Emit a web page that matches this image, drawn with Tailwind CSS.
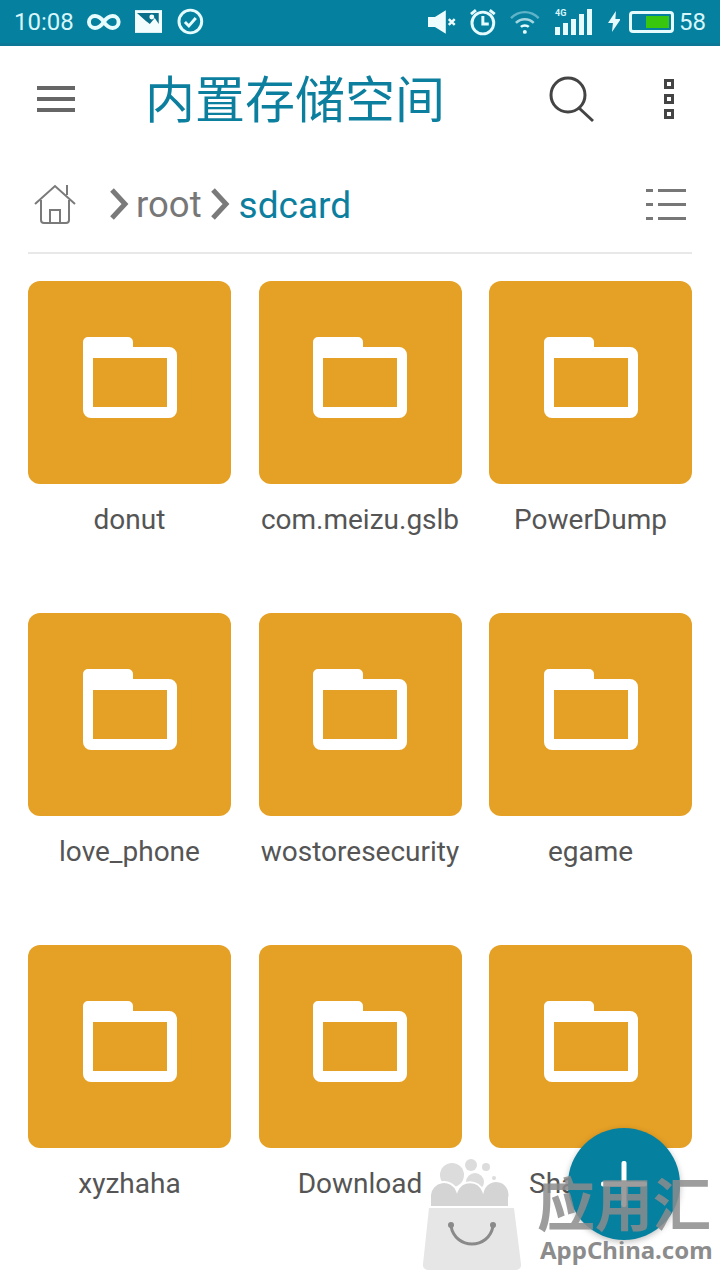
<!DOCTYPE html>
<html lang="zh">
<head>
  <meta charset="UTF-8" />
  <meta name="viewport" content="width=device-width,initial-scale=1.0" />
  <title>内置存储空间</title>
  <script src="https://cdn.jsdelivr.net/npm/@tailwindcss/browser@4"></script>
</head>
<body class="relative w-[720px] h-[1280px] overflow-hidden bg-white font-['Roboto','Noto_Sans_CJK_SC',sans-serif]">
  <!-- Status bar -->
  <div class="h-[46px] bg-[#05809f] border-b-[3px] border-[#0a7896] flex items-center pl-[14px] pr-[14px] text-[#d8f6fa] text-[24px]">
    <span class="w-[59px]">10:08</span>
    <svg class="ml-[14px]" width="34" height="18" viewBox="0 0 34 18" fill="none" stroke="#e6fbfd" stroke-width="4"><path d="M17 9C13 3 10 3 8 3a6 6 0 0 0 0 12c2 0 5 0 9-6c4-6 7-6 9-6a6 6 0 0 1 0 12c-2 0-5 0-9-6z" /></svg>
    <svg class="ml-[14px]" width="28" height="24" viewBox="0 0 28 24"><rect width="28" height="23" y="0" fill="#f4fdfd" /><path d="M2 3H24V14L20 8L15 14L11 11z" fill="#0a6f8b" /><circle cx="17" cy="7" r="2.5" fill="#f4fdfd" /></svg>
    <svg class="ml-[15px]" width="27" height="27" viewBox="0 0 27 27" fill="none" stroke="#e6fbfd"><circle cx="13.500" cy="13.500" r="11.500" stroke-width="3" /><path d="M8 14l4 4l7-8" stroke-width="3" /></svg>
    <svg class="ml-[224px]" width="28" height="24" viewBox="0 0 28 24" fill="#eefcfd"><path d="M0 7H7L18 0V24L7 17H0z" /><path d="M21 9l6 6M27 9l-6 6" stroke="#eefcfd" stroke-width="2.500" /></svg>
    <svg class="ml-[13px]" width="28" height="28" viewBox="0 0 28 28" fill="none" stroke="#e6fbfd" stroke-width="3"><circle cx="14" cy="15" r="11" /><path d="M14 8v8h6" /><path d="M2 6l5-4M26 6l-5-4" /></svg>
    <svg class="ml-[14px]" width="30" height="24" viewBox="0 0 30 24" fill="none"><path d="M1 8C9 0 21 0 29 8" stroke="#5fb3c8" stroke-width="2.500" /><path d="M6 13C11 8 19 8 24 13" stroke="#a4d6e1" stroke-width="2.500" /><path d="M11 17c2-2 6-2 8 0" stroke="#e6fbfd" stroke-width="2.500" /><circle cx="15" cy="22" r="2" fill="#e6fbfd" /></svg>
    <div class="ml-[15px] relative w-[37px] h-[26px]">
      <span class="absolute left-0 top-[-1px] text-[9px] leading-[10px] font-bold">4G</span>
      <div class="absolute inset-0 flex items-end gap-[3px]">
        <span class="w-[5px] h-[8px] bg-[#e6fbfd]"></span><span class="w-[5px] h-[12px] bg-[#e6fbfd]"></span><span class="w-[5px] h-[16px] bg-[#e6fbfd]"></span><span class="w-[5px] h-[21px] bg-[#e6fbfd]"></span><span class="w-[5px] h-[26px] bg-[#e6fbfd]"></span>
      </div>
    </div>
    <svg class="ml-[16px]" width="13" height="21" viewBox="0 0 13 21" fill="#e6fbfd"><path d="M8 0L0 12H5L4 21L13 8H7.500z" /></svg>
    <div class="ml-[9px] w-[45px] h-[22px] border-[3px] border-[#e6fbfd] rounded-[4px] flex justify-end pr-[2px] py-[2px]">
      <div class="w-[23px] bg-[#38c60f]"></div>
    </div>
    <span class="ml-[5px]">58</span>
  </div>

  <!-- Toolbar -->
  <header class="h-[106px] flex items-center pl-[37px]">
    <div class="w-[38px] flex flex-col gap-[7px] mt-[-1px]">
      <span class="h-[4px] bg-[#666]"></span><span class="h-[4px] bg-[#666]"></span><span class="h-[4px] bg-[#666]"></span>
    </div>
    <h1 class="ml-[70px] mt-[-6px] w-[302px] text-[50px] leading-none font-['Noto_Sans_CJK_SC',sans-serif] font-normal text-[#0d7f9e] whitespace-nowrap">内置存储空间</h1>
    <svg class="ml-[100px]" width="50" height="50" viewBox="0 0 50 50" fill="none" stroke="#444" stroke-width="3"><circle cx="21" cy="21" r="17" /><path d="M32 34L46 47" /></svg>
    <div class="ml-[67px] flex flex-col gap-[5px]">
      <span class="w-[10px] h-[10px] border-[3px] border-[#444]"></span><span class="w-[10px] h-[10px] border-[3px] border-[#444]"></span><span class="w-[10px] h-[10px] border-[3px] border-[#444]"></span>
    </div>
  </header>

  <!-- Breadcrumb -->
  <nav class="mx-[28px] h-[102px] border-b-2 border-[#e8e8e8] flex items-center pl-[6px] pt-[4px]">
    <svg width="42" height="42" viewBox="0 0 42 42" fill="none" stroke="#7a7a7a" stroke-width="2"><path d="M1 21L21 3L41 21" /><path d="M33 2V12" /><path d="M7 17V37a3 3 0 0 0 3 3H32a3 3 0 0 0 3-3V17" /><path d="M16 40V27H26V40" /></svg>
    <svg class="ml-[33px]" width="20" height="32" viewBox="0 0 20 32" fill="none" stroke="#7a7a7a" stroke-width="5"><path d="M3 2L16 16L3 30" /></svg>
    <span class="ml-[7px] mt-[3px] text-[36.500px] leading-none text-[#777]">root</span>
    <svg class="ml-[8px]" width="20" height="32" viewBox="0 0 20 32" fill="none" stroke="#7a7a7a" stroke-width="5"><path d="M3 2L16 16L3 30" /></svg>
    <span class="ml-[9px] mt-[3px] text-[37px] leading-none text-[#0d7f9e]">sdcard</span>
    <div class="ml-auto mr-[6px] w-[40px] grid grid-cols-[7px_28px] gap-x-[5px] gap-y-[11px]">
      <span class="h-[3px] bg-[#777]"></span><span class="h-[3px] bg-[#777]"></span>
      <span class="h-[3px] bg-[#777]"></span><span class="h-[3px] bg-[#777]"></span>
      <span class="h-[3px] bg-[#777]"></span><span class="h-[3px] bg-[#777]"></span>
    </div>
  </nav>

  <!-- Folder grid -->
  <main class="grid grid-cols-[203px_203px_203px] gap-x-[27.500px] px-[28px] pt-[27px]">
    <div class="h-[332px]"><div class="h-[203px] rounded-[12px] bg-[#e5a126] flex justify-center pt-[56px]"><svg width="94" height="81" viewBox="0 0 94 81"><path fill="#fff" fill-rule="evenodd" d="M5 0H45a5 5 0 0 1 5 5V10H86a8 8 0 0 1 8 8V73a8 8 0 0 1-8 8H8a8 8 0 0 1-8-8V5a5 5 0 0 1 5-5zM10 21V70H84V21z" /></svg></div><p class="mt-[19px] text-center text-[28px] leading-[34px] text-[#555] whitespace-nowrap">donut</p></div>
    <div class="h-[332px]"><div class="h-[203px] rounded-[12px] bg-[#e5a126] flex justify-center pt-[56px]"><svg width="94" height="81" viewBox="0 0 94 81"><path fill="#fff" fill-rule="evenodd" d="M5 0H45a5 5 0 0 1 5 5V10H86a8 8 0 0 1 8 8V73a8 8 0 0 1-8 8H8a8 8 0 0 1-8-8V5a5 5 0 0 1 5-5zM10 21V70H84V21z" /></svg></div><p class="mt-[19px] text-center text-[28px] leading-[34px] text-[#555] whitespace-nowrap">com.meizu.gslb</p></div>
    <div class="h-[332px]"><div class="h-[203px] rounded-[12px] bg-[#e5a126] flex justify-center pt-[56px]"><svg width="94" height="81" viewBox="0 0 94 81"><path fill="#fff" fill-rule="evenodd" d="M5 0H45a5 5 0 0 1 5 5V10H86a8 8 0 0 1 8 8V73a8 8 0 0 1-8 8H8a8 8 0 0 1-8-8V5a5 5 0 0 1 5-5zM10 21V70H84V21z" /></svg></div><p class="mt-[19px] text-center text-[28px] leading-[34px] text-[#555] whitespace-nowrap">PowerDump</p></div>
    <div class="h-[332px]"><div class="h-[203px] rounded-[12px] bg-[#e5a126] flex justify-center pt-[56px]"><svg width="94" height="81" viewBox="0 0 94 81"><path fill="#fff" fill-rule="evenodd" d="M5 0H45a5 5 0 0 1 5 5V10H86a8 8 0 0 1 8 8V73a8 8 0 0 1-8 8H8a8 8 0 0 1-8-8V5a5 5 0 0 1 5-5zM10 21V70H84V21z" /></svg></div><p class="mt-[19px] text-center text-[28px] leading-[34px] text-[#555] whitespace-nowrap">love_phone</p></div>
    <div class="h-[332px]"><div class="h-[203px] rounded-[12px] bg-[#e5a126] flex justify-center pt-[56px]"><svg width="94" height="81" viewBox="0 0 94 81"><path fill="#fff" fill-rule="evenodd" d="M5 0H45a5 5 0 0 1 5 5V10H86a8 8 0 0 1 8 8V73a8 8 0 0 1-8 8H8a8 8 0 0 1-8-8V5a5 5 0 0 1 5-5zM10 21V70H84V21z" /></svg></div><p class="mt-[19px] text-center text-[28px] leading-[34px] text-[#555] whitespace-nowrap">wostoresecurity</p></div>
    <div class="h-[332px]"><div class="h-[203px] rounded-[12px] bg-[#e5a126] flex justify-center pt-[56px]"><svg width="94" height="81" viewBox="0 0 94 81"><path fill="#fff" fill-rule="evenodd" d="M5 0H45a5 5 0 0 1 5 5V10H86a8 8 0 0 1 8 8V73a8 8 0 0 1-8 8H8a8 8 0 0 1-8-8V5a5 5 0 0 1 5-5zM10 21V70H84V21z" /></svg></div><p class="mt-[19px] text-center text-[28px] leading-[34px] text-[#555] whitespace-nowrap">egame</p></div>
    <div class="h-[332px]"><div class="h-[203px] rounded-[12px] bg-[#e5a126] flex justify-center pt-[56px]"><svg width="94" height="81" viewBox="0 0 94 81"><path fill="#fff" fill-rule="evenodd" d="M5 0H45a5 5 0 0 1 5 5V10H86a8 8 0 0 1 8 8V73a8 8 0 0 1-8 8H8a8 8 0 0 1-8-8V5a5 5 0 0 1 5-5zM10 21V70H84V21z" /></svg></div><p class="mt-[19px] text-center text-[28px] leading-[34px] text-[#555] whitespace-nowrap">xyzhaha</p></div>
    <div class="h-[332px]"><div class="h-[203px] rounded-[12px] bg-[#e5a126] flex justify-center pt-[56px]"><svg width="94" height="81" viewBox="0 0 94 81"><path fill="#fff" fill-rule="evenodd" d="M5 0H45a5 5 0 0 1 5 5V10H86a8 8 0 0 1 8 8V73a8 8 0 0 1-8 8H8a8 8 0 0 1-8-8V5a5 5 0 0 1 5-5zM10 21V70H84V21z" /></svg></div><p class="mt-[19px] text-center text-[28px] leading-[34px] text-[#555] whitespace-nowrap">Download</p></div>
    <div class="h-[332px]"><div class="h-[203px] rounded-[12px] bg-[#e5a126] flex justify-center pt-[56px]"><svg width="94" height="81" viewBox="0 0 94 81"><path fill="#fff" fill-rule="evenodd" d="M5 0H45a5 5 0 0 1 5 5V10H86a8 8 0 0 1 8 8V73a8 8 0 0 1-8 8H8a8 8 0 0 1-8-8V5a5 5 0 0 1 5-5zM10 21V70H84V21z" /></svg></div><p class="mt-[19px] pl-[40px] text-[28px] leading-[34px] text-[#555] whitespace-nowrap">Sha</p></div>
  </main>

  <!-- FAB -->
  <button class="absolute left-[568px] top-[1128px] w-[112px] h-[112px] rounded-full bg-[#06809f] shadow-[0_2px_6px_rgba(0,0,0,0.25)] flex items-center justify-center">
    <svg width="46" height="46" viewBox="0 0 46 46" fill="#fff"><rect x="20.500" width="5" height="46" rx="2" /><rect y="20.500" width="46" height="5" rx="2" /></svg>
  </button>

  <!-- AppChina watermark -->
  <svg class="absolute left-[420px] top-[1150px]" width="110" height="125" viewBox="420 1150 110 125">
    <g fill="#dcdcdc">
      <circle cx="452" cy="1175" r="12" /><circle cx="471" cy="1165" r="6" /><circle cx="486" cy="1167" r="4" /><circle cx="494" cy="1178" r="2" /><circle cx="475" cy="1182" r="9" />
    </g>
    <path fill="#d4d4d4" stroke="#fff" stroke-width="2" d="M430 1207V1195a14 14 0 0 1 27-4a14 14 0 0 1 26 0a12 12 0 0 1 26 7V1207z" />
    <path fill="#e6e6e6" d="M429 1208H514L521 1264a5 5 0 0 1-5 6H428a5 5 0 0 1-5-6z" />
    <path fill="none" stroke="#8a8a8a" stroke-width="3" d="M451 1226c4 24 38 24 42 0" />
    <circle cx="451" cy="1225" r="3" fill="#8a8a8a" /><circle cx="493" cy="1225" r="3" fill="#8a8a8a" />
  </svg>
  <div class="absolute left-[537px] top-[1165px] text-[58px] leading-[72px] font-['Noto_Sans_CJK_SC',sans-serif] font-bold text-[#8c8c8c]/85 whitespace-nowrap">应用汇</div>
  <div class="absolute left-[540px] top-[1236px] text-[24px] leading-[28px] font-['Noto_Sans',sans-serif] font-bold text-[#8c8c8c] whitespace-nowrap">AppChina.com</div>
</body>
</html>
